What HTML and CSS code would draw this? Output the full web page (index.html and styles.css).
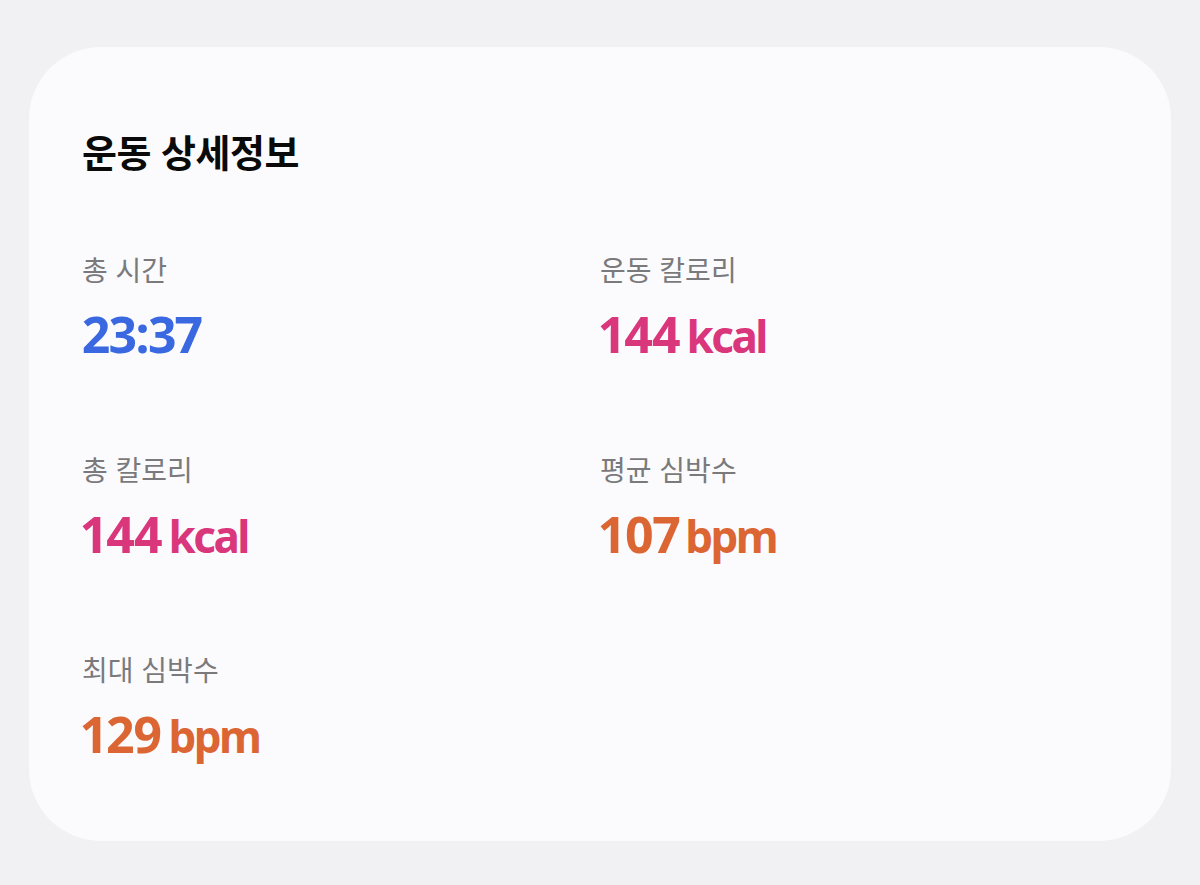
FILE: index.html
```html
<!DOCTYPE html>
<html lang="ko">
<head>
<meta charset="utf-8">
<link rel="stylesheet" href="styles.css">
</head>
<body>
<section class="card">
  <h1 class="title">운동 상세정보</h1>
  <div class="grid">
    <div class="stat">
      <div class="label">총 시간</div>
      <div class="value blue"><span class="num">23:37</span></div>
    </div>
    <div class="stat">
      <div class="label">운동 칼로리</div>
      <div class="value pink"><span class="num">144</span> <span class="unit">kcal</span></div>
    </div>
    <div class="stat">
      <div class="label">총 칼로리</div>
      <div class="value pink"><span class="num">144</span> <span class="unit">kcal</span></div>
    </div>
    <div class="stat">
      <div class="label">평균 심박수</div>
      <div class="value orange"><span class="num">107</span> <span class="unit">bpm</span></div>
    </div>
    <div class="stat">
      <div class="label">최대 심박수</div>
      <div class="value orange"><span class="num">129</span> <span class="unit">bpm</span></div>
    </div>
  </div>
</section>
</body>
</html>
```
FILE: styles.css
```css
html, body {
  margin: 0;
  padding: 0;
}
body {
  background: #f1f1f3;
  width: 1200px;
  height: 885px;
  font-family: "Noto Sans", "Noto Sans CJK KR", sans-serif;
  padding: 47px 29px 0 29px;
  box-sizing: border-box;
}
.card {
  background: #fbfbfd;
  border-radius: 72px;
  height: 794px;
  box-sizing: border-box;
  padding: 82px 53px 0 53px;
}
.title {
  margin: 0;
  font-family: "Noto Sans CJK KR", sans-serif;
  font-size: 38px;
  font-weight: 700;
  line-height: 44px;
  color: #0a0a0a;
  letter-spacing: -0.5px;
}
.grid {
  display: grid;
  grid-template-columns: 1fr 1fr;
  row-gap: 89px;
  margin-top: 79px;
}
.stat {
  display: flex;
  flex-direction: column;
  gap: 21px;
}
.label {
  font-family: "Noto Sans CJK KR", sans-serif;
  font-size: 28px;
  line-height: 34px;
  color: #7a7a7c;
  font-weight: 400;
}
.value {
  font-family: "Noto Sans", sans-serif;
  font-size: 50px;
  line-height: 54px;
  font-weight: 700;
  word-spacing: -6px;
}
.num {
  letter-spacing: -1.5px;
  font-variant-numeric: proportional-nums;
}
.unit {
  font-size: 44px;
  letter-spacing: -2.5px;
}
.blue { color: #3a68e0; }
.pink { color: #d9367b; }
.orange { color: #db6634; }
```
